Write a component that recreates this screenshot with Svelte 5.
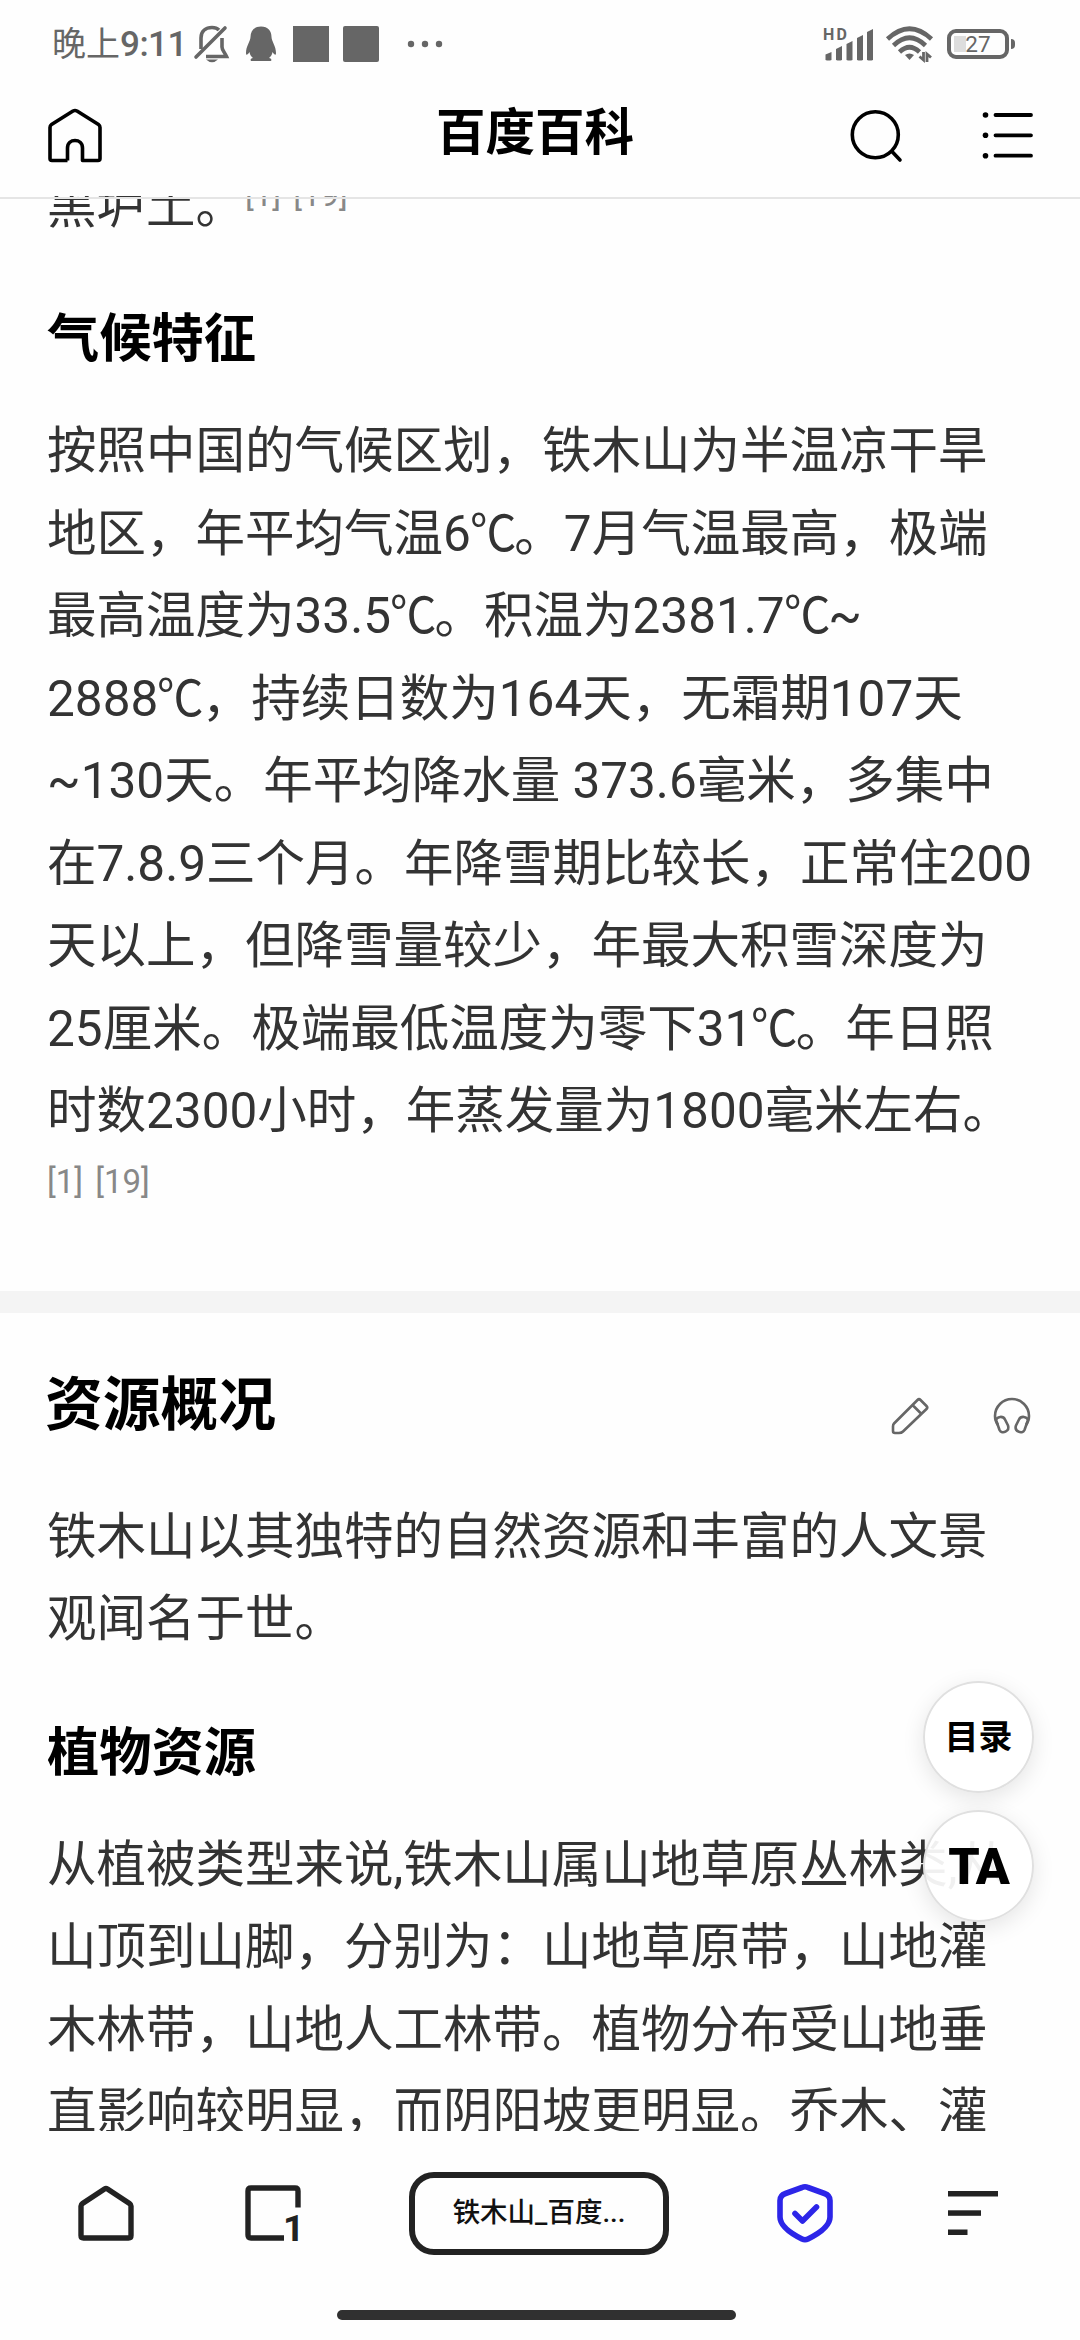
<script>
	const climate = [
		'按照中国的气候区划，铁木山为半温凉干旱',
		'地区，年平均气温6℃。7月气温最高，极端',
		'最高温度为33.5℃。积温为2381.7℃~',
		'2888℃，持续日数为164天，无霜期107天',
		'~130天。年平均降水量 373.6毫米，多集中',
		'在7.8.9三个月。年降雪期比较长，正常住200',
		'天以上，但降雪量较少，年最大积雪深度为',
		'25厘米。极端最低温度为零下31℃。年日照',
		'时数2300小时，年蒸发量为1800毫米左右。'
	];
	const resources = ['铁木山以其独特的自然资源和丰富的人文景', '观闻名于世。'];
	const plants = [
		'从植被类型来说,铁木山属山地草原丛林类,从',
		'山顶到山脚，分别为：山地草原带，山地灌',
		'木林带，山地人工林带。植物分布受山地垂',
		'直影响较明显，而阴阳坡更明显。乔木、灌'
	];

	// the degree sign is set a little tighter than a full CJK cell
	function split(line) {
		return line.split(/(℃)/);
	}
</script>

<div class="screen">
	<div class="status">
		<span class="time">晚上<span class="digits">9:11</span></span>
		<svg class="bell" width="36" height="40" viewBox="0 0 36 40" fill="none" stroke="#666" stroke-width="3.6">
			<path d="M7 24V13C7 6 12 2.500 18 2.500C21 2.500 23.500 3.500 25 5M28 13V22C28 25 30.500 27 32.500 31.500H12" />
			<path d="M2 32L31 3" stroke-linecap="round" />
			<path d="M12 34.500H24Q18 40 12 34.500Z" fill="#666" stroke="none" />
		</svg>
		<svg class="qq" width="32" height="38" viewBox="0 0 32 38" fill="#666">
			<path d="M16 1.500C9 1.500 5.500 6 5.500 12C5.500 16 1 21 1 28C1 31 2.500 30 4.500 27C5 30 6 31 8 33C5 33.500 5 36 7 36H25C27 36 27 33.500 24 33C26 31 27 30 27.500 27C29.500 30 31 31 31 28C31 21 26.500 16 26.500 12C26.500 6 23 1.500 16 1.500Z" />
		</svg>
		<i class="app"></i>
		<i class="app second"></i>
		<svg class="dots" width="36" height="8" viewBox="0 0 36 8" fill="#666">
			<circle cx="4" cy="4" r="3.200" /><circle cx="18" cy="4" r="3.200" /><circle cx="32" cy="4" r="3.200" />
		</svg>

		<svg class="signal" width="52" height="36" viewBox="0 0 52 36" fill="#666">
			<text x="0" y="14" font-size="16" font-weight="700" textLength="24">HD</text>
			<path d="M2.500 34V28.500L8.500 26V34Q5.500 35 2.500 34Z" />
			<path d="M13 34V23L19 20V34Q16 35 13 34Z" />
			<path d="M23.500 34V18L29.500 15V34Q26.500 35 23.500 34Z" />
			<path d="M34 34V12L40 9V34Q37 35 34 34Z" />
			<path d="M44 34V6L50 3V34Q47 35 44 34Z" />
		</svg>
		<svg class="wifi" width="48" height="38" viewBox="0 0 48 38" fill="none" stroke="#666" stroke-width="4.600">
			<path d="M1.500 13Q23.500 -7.500 45.500 13M7.500 19.500Q23.500 4 39.500 19.500M13.500 26Q23.500 16.500 33.500 26" />
			<path d="M19 29Q23.500 26 28 29L23.500 34Z" fill="#666" stroke="none" />
			<path d="M37.500 26V34L33.500 30.500M41 36V28L45 31.500" stroke-width="2.800" />
		</svg>
		<div class="battery"><span>27</span></div>
		<i class="tip"></i>
	</div>

	<header>
		<svg width="54" height="55" viewBox="0 0 54 55" fill="none" stroke="#000" stroke-width="3.600" stroke-linejoin="round">
			<path d="M19.500 52.500H4Q2 52.500 2 50.500V19.500Q2 17.500 3.500 16.500L25 3Q27 2 29 3L50.500 16.500Q52 17.500 52 19.500V50.500Q52 52.500 50 52.500H34.500V40C34.500 30 19.500 30 19.500 40V52.500" />
		</svg>
		<h1>百度百科</h1>
		<svg width="54" height="56" viewBox="0 0 54 56" fill="none" stroke="#000" stroke-width="3.600" stroke-linecap="round">
			<circle cx="26.300" cy="26.800" r="23" />
			<path d="M43 43.500L51 52" />
		</svg>
		<svg class="list" width="54" height="47" viewBox="0 0 54 47" stroke="#000" stroke-width="3.800" stroke-linecap="round">
			<path d="M14.500 3H50M14.500 23.300H50M14.500 43.700H50" />
			<g stroke="none"><circle cx="4.500" cy="3" r="2.800" /><circle cx="4.500" cy="23.300" r="2.800" /><circle cx="4.500" cy="43.700" r="2.800" /></g>
		</svg>
	</header>

	<main>
		<p class="prev">黑垆土。<sup>[1] [19]</sup></p>
		<h3>气候特征</h3>
		<p>
			{#each climate as line}
				<span class="line">{#each split(line) as part}{#if part === '℃'}<span class="deg">℃</span>{:else}{part}{/if}{/each}</span>
			{/each}
			<span class="refs">[1] [19]</span>
		</p>
		<div class="band"></div>
		<div class="section">
			<h2>资源概况</h2>
			<svg width="38" height="38" viewBox="0 0 38 38" fill="none" stroke="#666" stroke-width="2.600" stroke-linejoin="round">
				<path d="M3 26.500L26.500 3Q28 1.500 29.500 3L35.500 9Q37 10.500 35.500 12L12 34.500Q10.500 36 8 36H4Q2 36 2 34V29.500Q2 27.500 3 26.500ZM21.500 8L30.500 17" />
			</svg>
			<svg width="38" height="38" viewBox="0 0 38 38" fill="none" stroke="#666" stroke-width="2.600">
				<path d="M5 28Q2 24 2 19A17 17 0 0 1 36 19Q36 24 33 28" />
				<path d="M3 23C4 19.500 10 18.500 12 22.500L15 28.500C17 34 9 38 6.500 33Z" />
				<path d="M35 23C34 19.500 28 18.500 26 22.500L23 28.500C21 34 29 38 31.500 33Z" />
			</svg>
		</div>
		<p>
			{#each resources as line}
				<span class="line">{line}</span>
			{/each}
		</p>
		<h3>植物资源</h3>
		<p>
			{#each plants as line}
				<span class="line">{line}</span>
			{/each}
		</p>
	</main>

	<div class="floats">
		<button>目录</button>
		<button><b>TA</b></button>
	</div>

	<nav>
		<svg width="56" height="56" viewBox="0 0 56 56" fill="none" stroke="#222" stroke-width="5.400" stroke-linejoin="round">
			<path d="M3 21Q3 19.500 4.500 18.500L26.500 4Q28 3 29.500 4L51.500 18.500Q53 19.500 53 21V50.500Q53 53 50.500 53H5.500Q3 53 3 50.500Z" />
		</svg>
		<svg class="tabs" width="56" height="56" viewBox="0 0 56 56" fill="none" stroke="#222" stroke-width="5.400">
			<path d="M39 53H6Q3 53 3 50V6Q3 3 6 3H50Q53 3 53 6V22.500" />
			<text x="42" y="55.500" font-size="37.500" font-weight="700" fill="#222" stroke="none">1</text>
		</svg>
		<div class="pill">铁木山_百度...</div>
		<svg class="shield" width="58" height="60" viewBox="0 0 58 60" fill="none" stroke="#2c25e8" stroke-width="5.600" stroke-linecap="round" stroke-linejoin="round">
			<path d="M26 4.500Q29 3 32 4.500L48.500 10.500Q54 12.500 54 17.500V34C54 44 39 52.500 32 56Q29 57.500 26 56C19 52.500 4 44 4 34V17.500Q4 12.500 9.500 10.500Z" />
			<path d="M19 30.500L26.500 38L40.500 24" />
		</svg>
		<svg class="menu" width="50" height="44" viewBox="0 0 50 44" fill="#222">
			<rect width="50" height="5.500" /><rect y="19.300" width="33" height="5.500" /><rect y="38.500" width="19.500" height="5.500" />
		</svg>
		<div class="indicator"></div>
	</nav>
</div>

<style>
	:global(body) {
		background: #fff;
	}
	.screen {
		position: relative;
		width: 1080px;
		height: 2340px;
		overflow: hidden;
		background: #fefefe;
		font-family: Roboto, 'Noto Sans CJK SC', sans-serif;
		color: #333;
	}
	svg,
	i {
		flex: none;
		display: block;
	}
	svg {
		overflow: visible;
	}

	.status {
		display: flex;
		align-items: center;
		height: 88px;
		padding: 0 65px 0 52px;
		box-sizing: border-box;
		color: #666;
	}
	.time {
		width: 142px;
		font-size: 34px;
		line-height: 40px;
		white-space: nowrap;
	}
	.digits {
		font-size: 35px;
		font-weight: 500;
		letter-spacing: -0.5px;
	}
	.bell {
		margin-top: 2px;
	}
	.qq {
		margin-left: 15px;
	}
	.app {
		width: 36px;
		height: 36px;
		margin-left: 16px;
		background: #666;
	}
	.second {
		margin-left: 14px;
		border-radius: 2px;
	}
	.dots {
		margin-left: 28px;
	}
	.signal {
		margin-left: auto;
	}
	.wifi {
		margin: 2px 13px 0 11px;
	}
	.battery {
		width: 62px;
		height: 30px;
		box-sizing: border-box;
		border: 4px solid #666;
		border-radius: 9px;
		background: linear-gradient(#ddd, #ddd) 3px 3px / 12px 16px no-repeat;
		font-size: 22.5px;
		line-height: 23px;
		text-align: center;
	}
	.tip {
		width: 4px;
		height: 10px;
		margin-left: 2px;
		border-radius: 0 4px 4px 0;
		background: #666;
	}

	header {
		position: relative;
		display: flex;
		align-items: center;
		height: 108px;
		padding: 0 45px 18px 48px;
		box-sizing: border-box;
		z-index: 1;
	}
	header::after {
		content: '';
		position: absolute;
		left: 0;
		right: 0;
		top: 109px;
		height: 2px;
		background: #e5e5e5;
	}
	header svg {
		margin-top: 5px;
	}
	header h1 {
		margin: 0 0 0 334px;
		width: 413px;
		font-size: 49.5px;
		font-weight: 700;
		line-height: 60px;
		color: #000;
	}
	header .list {
		margin-left: 78px;
	}

	main {
		height: 1935px;
		overflow: hidden;
	}
	p {
		margin: 0 0 0 47px;
		font-size: 49.5px;
		line-height: 82.5px;
	}
	.line {
		display: block;
		height: 82.5px;
		white-space: nowrap;
	}
	.deg {
		display: inline-block;
		width: 43.5px;
		text-indent: -1px;
		transform: scaleX(0.94);
		transform-origin: left;
	}
	.prev {
		height: 82.5px;
		margin-top: -31.5px;
	}
	sup,
	.refs {
		font-size: 33px;
		word-spacing: 4px;
		color: #888;
	}
	sup {
		display: inline-block;
		line-height: 40px;
		vertical-align: 17px;
	}
	.refs {
		display: block;
		height: 138px;
		line-height: 58px;
	}
	h3 {
		margin: 58px 0 35px 47px;
		font-size: 52.25px;
		line-height: 70px;
		font-weight: 700;
		color: #000;
	}
	.band {
		height: 22px;
		background: #f4f4f4;
	}
	.section {
		display: flex;
		align-items: center;
		height: 183px;
		padding: 0 49px 0 45px;
	}
	.section h2 {
		flex: 1;
		margin: 2px 0 0;
		font-size: 57.75px;
		line-height: 80px;
		font-weight: 700;
		color: #000;
	}
	.section svg {
		margin: 23px 0 0 64px;
	}

	.floats {
		position: absolute;
		left: 923px;
		top: 1681px;
		display: grid;
		gap: 17px;
	}
	.floats button {
		width: 111px;
		height: 112px;
		padding: 0 0 6px;
		border: 2px solid #e0e0e0;
		border-radius: 50%;
		background: rgba(255, 255, 255, 0.93);
		box-shadow: 0 6px 22px rgba(0, 0, 0, 0.1);
		font: 700 34px Roboto, 'Noto Sans CJK SC', sans-serif;
		color: #000;
	}
	.floats b {
		display: block;
		padding-top: 7px;
		font-size: 50px;
		font-weight: 900;
		line-height: 50px;
		letter-spacing: -1px;
	}

	nav {
		position: relative;
		display: flex;
		align-items: center;
		height: 209px;
		padding: 0 78px 45px;
		box-sizing: border-box;
	}
	.tabs {
		margin-left: 111px;
	}
	.tabs text {
		transform: translateX(-4px);
	}
	.pill {
		width: 260px;
		height: 83px;
		margin-left: 108px;
		box-sizing: border-box;
		border: 6px solid #222;
		border-radius: 25px;
		font-size: 27.5px;
		font-weight: 500;
		line-height: 70px;
		text-align: center;
		color: #111;
	}
	.shield {
		margin-left: 107px;
	}
	.menu {
		margin-left: 114px;
	}
	.indicator {
		position: absolute;
		left: 337px;
		bottom: 20px;
		width: 399px;
		height: 10px;
		border-radius: 5px;
		background: #303030;
	}
</style>
